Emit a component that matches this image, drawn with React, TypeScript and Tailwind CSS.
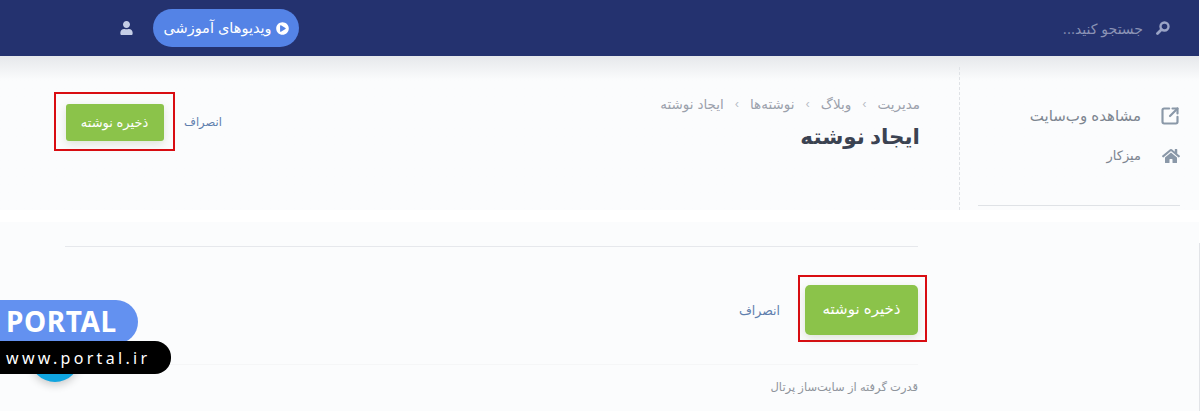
import { FaHome, FaPlayCircle, FaUser } from "react-icons/fa";
import { SquareArrowOutUpRight } from "lucide-react";

const font = "font-['Inter','DejaVu_Sans',sans-serif]";

function SaveButton({ large }: { large?: boolean }) {
  return (
    <div
      className={
        large
          ? "flex h-[67px] w-[129px] items-center justify-start border-2 border-[#d90d12] pl-[5px] pt-[2px]"
          : "flex h-[59px] w-[121px] items-center justify-center border-2 border-[#d90d12] pt-[2px]"
      }
    >
      <button
        dir="rtl"
        className={
          large
            ? "h-[50px] w-[113px] rounded-[5px] bg-[#8bc34a] text-[15px] text-white shadow-[0_3px_10px_rgba(90,110,50,0.18)]"
            : "h-[37px] w-[98px] rounded-[3px] bg-[#8bc34a] text-[13px] text-white shadow-[0_3px_10px_rgba(90,110,50,0.18)]"
        }
      >
        ذخیره نوشته
      </button>
    </div>
  );
}

function Chevron() {
  return <span className="px-[11px] text-[11px] text-[#b5bac4]">›</span>;
}

export default function App() {
  return (
    <div className={`relative h-[411px] w-[1200px] overflow-hidden bg-white ${font}`}>
      <section className="h-[210px] w-[1199px] bg-[#fbfcfd]">
        <header className="flex h-[56px] items-center justify-between bg-[#24326f] pl-[120px] pr-[29px]">
          <div className="flex items-center gap-[20px]">
            <FaUser className="h-[14px] w-[13px] text-[#c5cee6]" />
            <div className="flex h-[38px] w-[146px] items-center justify-center gap-[4px] rounded-full bg-[#5483e6] text-white">
              <span dir="rtl" className="text-[14.5px]">
                ویدیوهای آموزشی
              </span>
              <FaPlayCircle className="h-[13px] w-[13px]" />
            </div>
          </div>
          <div className="flex items-center gap-[13px]">
            <span dir="rtl" className="text-[14px] text-[#8b93b5]">
              جستجو کنید...
            </span>
            <svg viewBox="0 0 14 14" className="h-[14px] w-[14px] text-[#9aa4c6]" fill="none" stroke="currentColor">
              <circle cx="8.5" cy="5.5" r="4" strokeWidth="2.4" />
              <path d="M5.5 8.5 1.5 12.5" strokeWidth="2.8" strokeLinecap="round" />
            </svg>
          </div>
        </header>
        <div className="flex h-[154px] bg-gradient-to-b from-[#e6e8eb] via-[#fbfcfd] via-[16%] to-[#fbfcfd]">
          <div className="flex h-full w-[959px] pl-[54px] pr-[39px] pt-[36px]">
            <div className="flex h-[59px] items-center gap-[9px]">
              <SaveButton />
              <span dir="rtl" className="mt-[2px] text-[11.5px] text-[#5f7fae]">
                انصراف
              </span>
            </div>
            <div className="ml-auto flex flex-col items-start pt-[2px]" dir="rtl">
              <div className="flex h-[20px] items-center text-[13.5px] text-[#9ba1ac]">
                <span>مدیریت</span>
                <Chevron />
                <span>وبلاگ</span>
                <Chevron />
                <span>نوشته‌ها</span>
                <Chevron />
                <span>ایجاد نوشته</span>
              </div>
              <h1 className="mt-[5px] text-[21.5px] font-bold leading-[34px] text-[#3b4352]">ایجاد نوشته</h1>
            </div>
          </div>
          <aside className="mt-[11px] flex h-[143px] flex-1 flex-col border-l border-dashed border-[#dfe2e6] pl-[18px] pr-[19px]">
            <div className="pt-[39px]">
              <div className="flex h-[20px] items-center justify-end gap-[19px]">
                <span dir="rtl" className="text-[15px] text-[#7d8590]">
                  مشاهده وب‌سایت
                </span>
                <SquareArrowOutUpRight strokeWidth={2.6} className="h-[20px] w-[20px] text-[#8a98a8]" />
              </div>
              <div className="mt-[20px] flex h-[20px] items-center justify-end gap-[21px]">
                <span dir="rtl" className="text-[13px] text-[#7d8590]">
                  میزکار
                </span>
                <FaHome className="h-[18px] w-[18px] text-[#8a98a8]" />
              </div>
            </div>
            <div className="mt-[39px] border-t border-[#dfe2e6]" />
          </aside>
        </div>
      </section>

      <section className="mt-[12px] flex h-[189px] w-[1200px]">
        <div className="flex-1 bg-[#fbfcfd]">
          <div className="w-[918px] pl-[65px] pt-[24px]">
            <div className="border-t border-[#e6e8ec]" />
            <div className="mt-[28px] flex items-center justify-end">
              <span dir="rtl" className="mr-[18px] mt-[5px] text-[12.5px] text-[#5f7fae]">
                انصراف
              </span>
              <div className="-mr-[9px]">
                <SaveButton large />
              </div>
            </div>
            <div className="mt-[22px] border-t border-[#f5f6f7]" />
            <p dir="rtl" className="mt-[14px] text-[11.5px] text-[#8f949c]">
              قدرت گرفته از سایت‌ساز پرتال
            </p>
          </div>
        </div>
        <div className="mt-[21px] w-px bg-[#e2e4e8]" />
      </section>

      {/* watermark over the page */}
      <div className="absolute left-[30px] top-[332px] h-[50px] w-[50px] rounded-full bg-[#10a5e0] shadow-[0_3px_8px_rgba(0,0,0,0.2)]" />
      <div className="absolute left-0 top-[300px] flex h-[44px] w-[138px] items-start rounded-r-[22px] bg-[#6391f0] pl-[6px] pt-[7px]">
        <span className="font-['Noto_Sans',sans-serif] text-[28px] font-bold leading-none tracking-[0.6px] text-white">PORTAL</span>
      </div>
      <div className="absolute left-0 top-[341px] flex h-[33px] w-[171px] items-center rounded-r-[16px] bg-black pl-[6px]">
        <span className="font-['Noto_Sans',sans-serif] text-[16px] leading-none tracking-[3.3px] text-white">www.portal.ir</span>
      </div>
    </div>
  );
}
